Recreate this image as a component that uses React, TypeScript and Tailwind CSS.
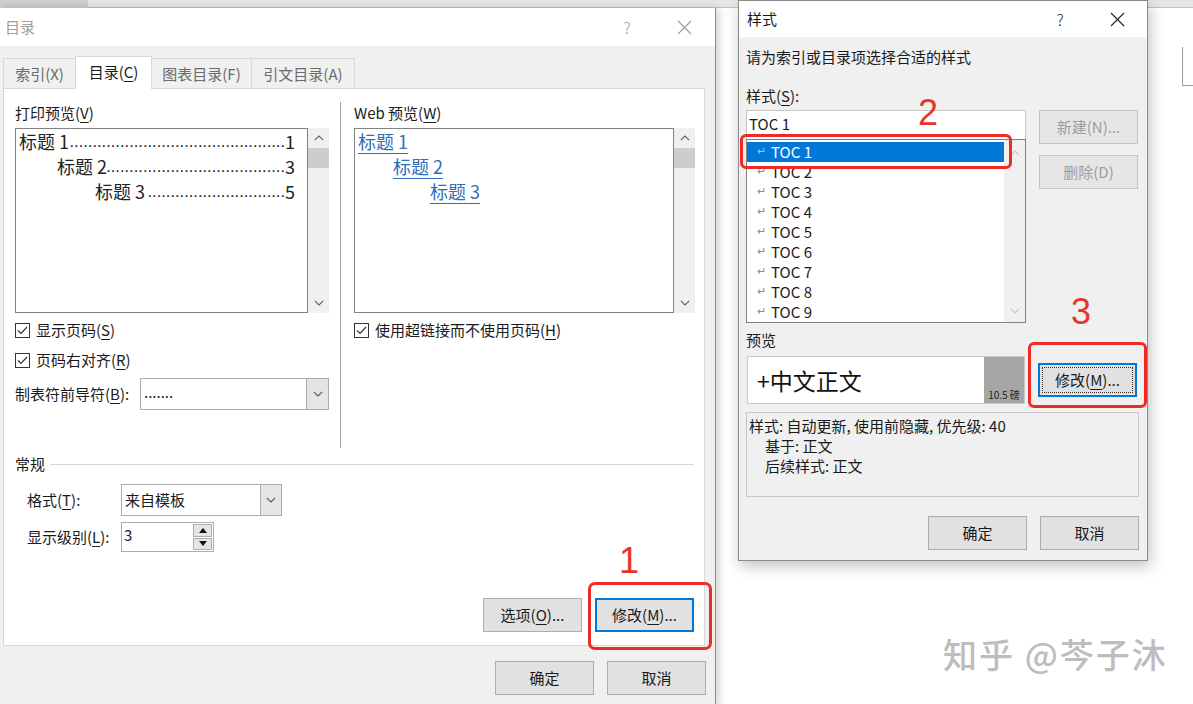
import React from "react";

const U = ({ c }: { c: string }) => (
  <span className="underline decoration-1 underline-offset-[3px]">{c}</span>
);

function Chevron({ dir, color = "#606060" }: { dir: "up" | "down"; color?: string }) {
  return (
    <svg width="10" height="6" viewBox="0 0 10 6">
      <path
        d={dir === "up" ? "M0.8 5.2 L5 1 L9.2 5.2" : "M0.8 0.8 L5 5 L9.2 0.8"}
        fill="none"
        stroke={color}
        strokeWidth="1.1"
      />
    </svg>
  );
}

function XIcon({ color }: { color: string }) {
  return (
    <svg width="15" height="15" viewBox="0 0 15 15">
      <path d="M1 1 L14 14 M14 1 L1 14" stroke={color} strokeWidth="1.1" fill="none" />
    </svg>
  );
}

function Check() {
  return (
    <span className="flex h-[15px] w-[15px] shrink-0 items-center justify-center border border-[#333] bg-white">
      <svg width="11" height="9" viewBox="0 0 11 9">
        <path d="M1 4.5 L4 7.5 L10 1" fill="none" stroke="#333" strokeWidth="1.2" />
      </svg>
    </span>
  );
}

function Btn({
  children,
  focus,
  dotted,
  disabled,
}: {
  children: React.ReactNode;
  focus?: boolean;
  dotted?: boolean;
  disabled?: boolean;
}) {
  return (
    <div
      className={`flex h-[34px] w-[99px] shrink-0 items-center justify-center text-[15px] leading-[20px] ${
        focus ? "border-2 border-[#0078d7]" : disabled ? "border border-[#c4c4c4]" : "border border-[#adadad]"
      } ${disabled ? "bg-[#e6e6e6] text-[#9d9d9d]" : "bg-[#e1e1e1] text-[#1a1a1a]"}`}
    >
      {dotted ? (
        <div className="flex h-[26px] w-[91px] items-center justify-center border border-dotted border-[#333]">
          {children}
        </div>
      ) : (
        children
      )}
    </div>
  );
}

function VScroll() {
  return (
    <div className="relative flex h-[185px] w-[21px] shrink-0 flex-col items-center bg-[#f0f0f0]">
      <div className="flex h-[20px] items-center">
        <Chevron dir="up" />
      </div>
      <div className="h-[20px] w-full bg-[#cdcdcd]" />
      <div className="flex-1" />
      <div className="flex h-[20px] items-center">
        <Chevron dir="down" />
      </div>
    </div>
  );
}

const printEntries = [
  { t: "标题 1", n: "1", d: 47, cls: "pl-0" },
  { t: "标题 2", n: "3", d: 39, cls: "pl-[38px]" },
  { t: "标题 3", n: "5", d: 30, cls: "pl-[76px]" },
];

const webEntries = [
  { t: "标题 1", cls: "pl-[2px]" },
  { t: "标题 2", cls: "pl-[37px]" },
  { t: "标题 3", cls: "pl-[74px]" },
];

function LeftDialog() {
  return (
    <div className="absolute left-0 top-[8px] flex h-[700px] w-[716px] flex-col border-r border-[#8c8c8c] bg-[#f0f0f0] shadow-[3px_0_8px_rgba(0,0,0,0.18)]">
      {/* title bar */}
      <div className="flex h-[38px] shrink-0 items-center bg-white pl-[5px] text-[15px] text-[#9d9d9d]">
        <span>目录</span>
        <span className="ml-auto w-[10px] text-center text-[16px] font-light">?</span>
        <span className="ml-[45px] mr-[23px] flex">
          <XIcon color="#9d9d9d" />
        </span>
      </div>

      {/* body */}
      <div className="flex flex-1 flex-col pl-[3px] pt-[10px]">
        {/* tabs */}
        <div className="relative z-10 -mb-px flex h-[33px] items-end text-[15px] leading-[20px]">
          <div className="flex h-[31px] w-[73px] items-center justify-center border border-[#d9d9d9] bg-[#f0f0f0] text-[#6a6a6a]">
            索引(X)
          </div>
          <div className="-ml-px flex h-[33px] w-[77px] items-center justify-center border border-[#d9d9d9] border-b-white bg-white pb-[2px] text-[#1a1a1a]">
            目录(<U c="C" />)
          </div>
          <div className="-ml-px flex h-[31px] w-[101px] items-center justify-center border border-[#d9d9d9] bg-[#f0f0f0] text-[#6a6a6a]">
            图表目录(F)
          </div>
          <div className="-ml-px flex h-[31px] w-[104px] items-center justify-center border border-[#d9d9d9] bg-[#f0f0f0] text-[#6a6a6a]">
            引文目录(A)
          </div>
        </div>

        {/* panel */}
        <div className="relative flex h-[558px] w-[702px] flex-col border border-[#d9d9d9] bg-white text-[15px] leading-[20px] text-[#1a1a1a]">
          {/* top section */}
          <div className="flex h-[365px] shrink-0 pl-[11px] pt-[14px]">
            {/* left column */}
            <div className="flex w-[314px] flex-col">
              <div className="h-[20px]">
                打印预览(<U c="V" />)
              </div>
              <div className="mt-[5px] flex h-[185px]">
                <div className="h-full w-[293px] border border-[#828282] pl-[3px] pr-[12px] text-[18px] leading-[25px] text-[#222]">
                  {printEntries.map((e) => (
                    <div key={e.t} className={`flex h-[25px] whitespace-nowrap ${e.cls}`}>
                      <span>{e.t}</span>
                      <span
                        dir="rtl"
                        className="min-w-0 flex-1 overflow-hidden text-right font-['Liberation_Sans',sans-serif] text-[16.5px]"
                      >
                        {".".repeat(e.d)}
                      </span>
                      <span>{e.n}</span>
                    </div>
                  ))}
                </div>
                <VScroll />
              </div>
              <div className="mt-[7px] flex h-[20px] items-center gap-[6px]">
                <Check />
                <span>
                  显示页码(<U c="S" />)
                </span>
              </div>
              <div className="mt-[10px] flex h-[20px] items-center gap-[6px]">
                <Check />
                <span>
                  页码右对齐(<U c="R" />)
                </span>
              </div>
              <div className="mt-[8px] flex h-[32px] items-center justify-between">
                <span>
                  制表符前导符(<U c="B" />):
                </span>
                <div className="flex h-[32px] w-[189px] border border-[#adadad] bg-white">
                  <div className="flex flex-1 items-center pl-[3px] pb-[4px]">.......</div>
                  <div className="flex w-[22px] items-center justify-center border-l border-[#adadad] bg-[#e5e5e5]">
                    <Chevron dir="down" color="#555" />
                  </div>
                </div>
              </div>
            </div>

            {/* separator */}
            <div className="ml-[11px] mt-[-1px] h-[346px] w-px bg-[#a3a3a3]" />

            {/* right column */}
            <div className="ml-[13px] flex w-[341px] flex-col">
              <div className="h-[20px]">
                Web 预览(<U c="W" />)
              </div>
              <div className="mt-[5px] flex h-[185px]">
                <div className="h-full w-[321px] border border-[#828282] pl-px text-[18px] leading-[25px]">
                  {webEntries.map((e) => (
                    <div key={e.t} className={`h-[25px] ${e.cls}`}>
                      <span className="text-[#2e6fb7] underline decoration-1 underline-offset-[4px]">{e.t}</span>
                    </div>
                  ))}
                </div>
                <VScroll />
              </div>
              <div className="mt-[7px] flex h-[20px] items-center gap-[6px]">
                <Check />
                <span>
                  使用超链接而不使用页码(<U c="H" />)
                </span>
              </div>
            </div>
          </div>

          {/* 常规 */}
          <div className="flex h-[20px] shrink-0 items-center pl-[11px] pr-[10px]">
            <span>常规</span>
            <div className="ml-[5px] h-px flex-1 bg-[#d5d5d5]" />
          </div>

          <div className="mt-[10px] flex h-[32px] shrink-0 items-center pl-[23px]">
            <span className="w-[94px]">
              格式(<U c="T" />):
            </span>
            <div className="flex h-[32px] w-[161px] border border-[#adadad] bg-white">
              <div className="flex flex-1 items-center pl-[3px]">来自模板</div>
              <div className="flex w-[21px] items-center justify-center border-l border-[#adadad] bg-[#e5e5e5]">
                <Chevron dir="down" color="#555" />
              </div>
            </div>
          </div>

          <div className="mt-[6px] flex h-[30px] shrink-0 items-center pl-[23px]">
            <span className="w-[94px]">
              显示级别(<U c="L" />):
            </span>
            <div className="flex h-[30px] w-[93px] border border-[#adadad] bg-white">
              <div className="flex flex-1 items-start pl-[2px] pt-[2px]">3</div>
              <div className="flex w-[20px] flex-col gap-px py-px pr-px">
                <div className="flex flex-1 items-center justify-center border border-[#adadad] bg-[#e5e5e5]">
                  <svg width="8" height="5" viewBox="0 0 8 5">
                    <path d="M0 5 L4 0 L8 5 Z" fill="#111" />
                  </svg>
                </div>
                <div className="flex flex-1 items-center justify-center border border-[#adadad] bg-[#e5e5e5]">
                  <svg width="8" height="5" viewBox="0 0 8 5">
                    <path d="M0 0 L4 5 L8 0 Z" fill="#111" />
                  </svg>
                </div>
              </div>
            </div>
          </div>

          <div className="mt-[46px] flex shrink-0 justify-end gap-[13px] pr-[10px]">
            <Btn>
              选项(<U c="O" />)...
            </Btn>
            <div className="relative">
              <Btn focus>
                修改(<U c="M" />)...
              </Btn>
              <div className="absolute -left-[7px] -top-[16px] z-20 h-[68px] w-[124px] rounded-[7px] border-[3px] border-[#ee2b24]" />
              <div className="absolute -top-[57px] left-[22px] z-20 w-[24px] text-center text-[36px] leading-[40px] text-[#e8342c] font-['Liberation_Sans',sans-serif]">
                1
              </div>
            </div>
          </div>
        </div>

        {/* bottom buttons */}
        <div className="mt-[15px] flex justify-end gap-[13px] pr-[9px]">
          <Btn>确定</Btn>
          <Btn>取消</Btn>
        </div>
      </div>
    </div>
  );
}

const tocItems = ["TOC 1", "TOC 2", "TOC 3", "TOC 4", "TOC 5", "TOC 6", "TOC 7", "TOC 8", "TOC 9"];

function RightDialog() {
  return (
    <div className="absolute left-[738px] top-0 flex h-[561px] w-[410px] flex-col border border-[#8a8a8a] bg-[#f0f0f0] text-[15px] leading-[20px] text-[#1a1a1a] shadow-[2px_5px_14px_rgba(0,0,0,0.25)]">
      {/* title */}
      <div className="flex h-[36px] shrink-0 items-center bg-white pl-[8px]">
        <span>样式</span>
        <span className="ml-auto w-[10px] text-center text-[16px] font-light">?</span>
        <span className="ml-[45px] mr-[22px] flex">
          <XIcon color="#222" />
        </span>
      </div>

      <div className="flex flex-1 flex-col pl-[7px] pr-[8px]">
        <div className="mt-[10px] h-[20px]">请为索引或目录项选择合适的样式</div>
        <div className="mt-[19px] h-[20px]">
          样式(<U c="S" />):
        </div>

        <div className="mt-[4px] flex gap-[13px]">
          {/* list column */}
          <div className="relative flex w-[280px] flex-col">
            <div className="flex h-[29px] items-center border border-b-0 border-[#c6c6c6] bg-white pb-[3px] pl-[2px]">TOC 1</div>
            <div className="flex h-[184px] border border-[#828282] bg-white">
              <div className="flex-1 pl-0 pt-[2px]">
                {tocItems.map((t, i) => (
                  <div
                    key={t}
                    className={`flex h-[20px] items-center ${i === 0 ? "bg-[#0078d7] text-white" : "text-[#1a1a1a]"}`}
                  >
                    <span
                      className={`ml-[10px] w-[14px] pb-[5px] text-[11px] leading-[12px] ${
                        i === 0 ? "text-[#9cc6f0]" : "text-[#8a8a8a]"
                      }`}
                    >
                      ↵
                    </span>
                    <span>{t}</span>
                  </div>
                ))}
              </div>
              <div className="flex w-[21px] flex-col items-center justify-between bg-[#f0f0f0] pb-[8px] pt-[10px]">
                <Chevron dir="up" color="#c9c9c9" />
                <Chevron dir="down" color="#c9c9c9" />
              </div>
            </div>
            {/* annotation 2 */}
            <div className="absolute -left-[6px] top-[24px] z-20 h-[35px] w-[272px] rounded-[6px] border-[3px] border-[#ee2b24]" />
            <div className="absolute left-[170px] -top-[17px] z-20 w-[24px] text-center text-[36px] leading-[40px] text-[#e8342c] font-['Liberation_Sans',sans-serif]">
              2
            </div>
          </div>

          {/* side buttons */}
          <div className="relative flex flex-col">
            <Btn disabled>新建(N)...</Btn>
            <div className="mt-[11px]">
              <Btn disabled>删除(D)</Btn>
            </div>
            <div className="absolute left-[30px] top-[182px] w-[24px] text-center text-[36px] leading-[40px] text-[#e8342c] font-['Liberation_Sans',sans-serif]">
              3
            </div>
          </div>
        </div>

        <div className="mt-[7px] h-[20px]">预览</div>

        <div className="mt-[6px] flex items-center">
          <div className="ml-px flex h-[48px] w-[278px] border border-[#c8c8c8] bg-white">
            <div className="flex flex-1 items-center pl-[9px] text-[23px] leading-[30px] text-[#111]">+中文正文</div>
            <div className="flex w-[40px] items-end justify-center bg-[#a6a6a6] pb-[1px] text-[10px] leading-[14px] text-[#222]">
              10.5 磅
            </div>
          </div>
          <div className="relative ml-[13px]">
            <Btn focus dotted>
              修改(<U c="M" />)...
            </Btn>
            <div className="absolute -left-[10px] -top-[21px] z-20 h-[66px] w-[119px] rounded-[6px] border-[3px] border-[#ee2b24]" />
          </div>
        </div>

        <div className="mt-[8px] h-[85px] w-[393px] border border-[#c8c8c8] pl-[2px] pt-[3px]">
          <div>样式: 自动更新, 使用前隐藏, 优先级: 40</div>
          <div className="pl-[16px]">基于: 正文</div>
          <div className="pl-[16px]">后续样式: 正文</div>
        </div>

        <div className="mt-[19px] flex justify-end gap-[13px]">
          <Btn>确定</Btn>
          <Btn>取消</Btn>
        </div>
      </div>
    </div>
  );
}

export default function App() {
  return (
    <div className="relative h-[704px] w-[1193px] overflow-hidden bg-white font-['Noto_Sans_CJK_SC','Noto_Sans',sans-serif] text-[#1a1a1a]">
      {/* application strip behind windows */}
      <div className="flex h-[8px] w-full">
        <div className="h-full w-[88px] bg-[#cfcfcf]" />
        <div className="h-full flex-1 border-b border-[#c4c4c4] bg-[#e6e6e6]" />
      </div>
      {/* page corner mark */}
      <div className="absolute left-[1182px] top-[47px] h-[39px] w-[12px] border-b border-l border-[#9a9a9a]" />

      <LeftDialog />
      <RightDialog />

      <div className="absolute left-[943px] top-[632px] whitespace-nowrap text-[34px] font-medium leading-[44px] tracking-[2px] text-[#bdbdbd]">
        知乎 @芩子沐
      </div>
    </div>
  );
}
